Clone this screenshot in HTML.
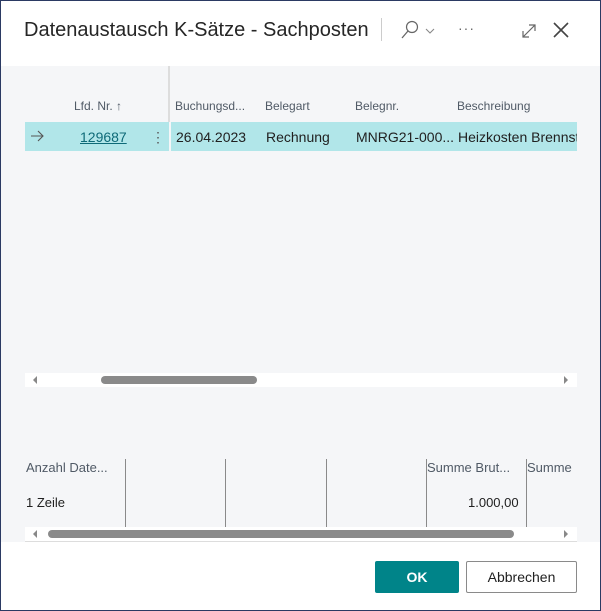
<!DOCTYPE html>
<html><head><style>
*{margin:0;padding:0;box-sizing:border-box}
body{width:601px;height:611px;background:#fff;font-family:"Liberation Sans",sans-serif;position:relative;overflow:hidden;color:#212121}
.frame{position:absolute;left:0;top:0;width:601px;height:611px;border:1px solid #2b3a63}
.abs{position:absolute;white-space:nowrap}
.gray{position:absolute;left:1px;top:66px;width:599px;height:476px;background:#f5f6f8}
.hdr{font-size:12px;color:#505a66;top:99px}
.cell{font-size:14px;top:129px;color:#212121}
.vl{position:absolute;width:1px;background:#8a8a8a}
.sb{position:absolute;left:25px;width:552px;height:14px;background:#fff}
.thumb{position:absolute;height:8px;top:3px;background:#8a8a8a;border-radius:4px}
.arrL{position:absolute;left:8px;top:3px;width:0;height:0;border-top:4px solid transparent;border-bottom:4px solid transparent;border-right:4px solid #888}
.arrR{position:absolute;right:9px;top:3px;width:0;height:0;border-top:4px solid transparent;border-bottom:4px solid transparent;border-left:4px solid #888}
</style></head><body>
<div class="frame"></div>
<div class="abs" style="left:24px;top:19px;font-size:20px;color:#262626">Datenaustausch K-Sätze - Sachposten</div>
<div class="vl" style="left:381px;top:18px;height:23px;background:#ccc"></div>
<svg class="abs" style="left:400px;top:20px" width="40" height="22"><circle cx="12" cy="7" r="5.5" fill="none" stroke="#666" stroke-width="1.2"/><line x1="8" y1="11" x2="2" y2="18" stroke="#666" stroke-width="1.3"/><polyline points="26,9 30,13 34,9" fill="none" stroke="#888" stroke-width="1.1"/></svg>
<div class="abs" style="left:458px;top:20px;font-size:14px;color:#666;letter-spacing:1px">···</div>
<svg class="abs" style="left:520px;top:20px" width="60" height="20"><path d="M3 17L15 5M9 5h6v6M3 11v6h6" fill="none" stroke="#666" stroke-width="1.2"/><path d="M34 3L48 17M48 3L34 17" stroke="#444" stroke-width="1.6"/></svg>
<div class="gray"></div>
<div class="vl" style="left:168px;top:66px;height:84px;background:#ddd;width:2px"></div>
<div class="abs hdr" style="left:74px">Lfd. Nr. ↑</div>
<div class="abs hdr" style="left:175px">Buchungsd...</div>
<div class="abs hdr" style="left:265px">Belegart</div>
<div class="abs hdr" style="left:355px">Belegnr.</div>
<div class="abs hdr" style="left:457px">Beschreibung</div>
<div class="abs" style="left:25px;top:122px;width:552px;height:29px;background:#b1e6e9"></div>
<div class="abs" style="left:169px;top:122px;width:2px;height:29px;background:#f5f6f8"></div>
<svg class="abs" style="left:30px;top:130px" width="16" height="12"><path d="M1 6h12M8 1l5 5-5 5" fill="none" stroke="#555" stroke-width="1.1"/></svg>
<div class="abs cell" style="left:80px;color:#0e6a78;text-decoration:underline">129687</div>
<div class="abs cell" style="left:151px;color:#555">⋮</div>
<div class="abs cell" style="left:176px">26.04.2023</div>
<div class="abs cell" style="left:266px">Rechnung</div>
<div class="abs cell" style="left:356px">MNRG21-000...</div>
<div class="abs" style="left:458px;top:122px;width:119px;height:29px;overflow:hidden"><div class="abs cell" style="left:0;top:7px">Heizkosten Brennstoff</div></div>
<div class="sb" style="top:373px"><div class="arrL"></div><div class="thumb" style="left:76px;width:156px"></div><div class="arrR"></div></div>
<div class="abs" style="left:26px;top:460px;font-size:13px;color:#505a66">Anzahl Date...</div>
<div class="abs" style="left:427px;top:460px;font-size:13px;color:#505a66">Summe Brut...</div>
<div class="abs" style="left:527px;top:460px;font-size:13px;color:#505a66;width:50px;overflow:hidden">Summe</div>
<div class="abs" style="left:26px;top:495px;font-size:13px">1 Zeile</div>
<div class="abs" style="left:468px;top:495px;font-size:13px">1.000,00</div>
<div class="vl" style="left:125px;top:459px;height:68px"></div>
<div class="vl" style="left:225px;top:459px;height:68px"></div>
<div class="vl" style="left:326px;top:459px;height:68px"></div>
<div class="vl" style="left:426px;top:459px;height:68px"></div>
<div class="vl" style="left:526px;top:459px;height:68px"></div>
<div class="sb" style="top:527px;border-bottom:1px solid #ddd;height:15px"><div class="arrL"></div><div class="thumb" style="left:23px;width:466px"></div><div class="arrR"></div></div>
<div class="abs" style="left:375px;top:561px;width:84px;height:32px;background:#008489;color:#fff;font-weight:bold;font-size:14px;text-align:center;line-height:32px;border-radius:2px">OK</div>
<div class="abs" style="left:466px;top:561px;width:111px;height:32px;border:1px solid #8a8a8a;background:#fff;font-size:14px;text-align:center;line-height:30px;border-radius:2px">Abbrechen</div>
</body></html>
